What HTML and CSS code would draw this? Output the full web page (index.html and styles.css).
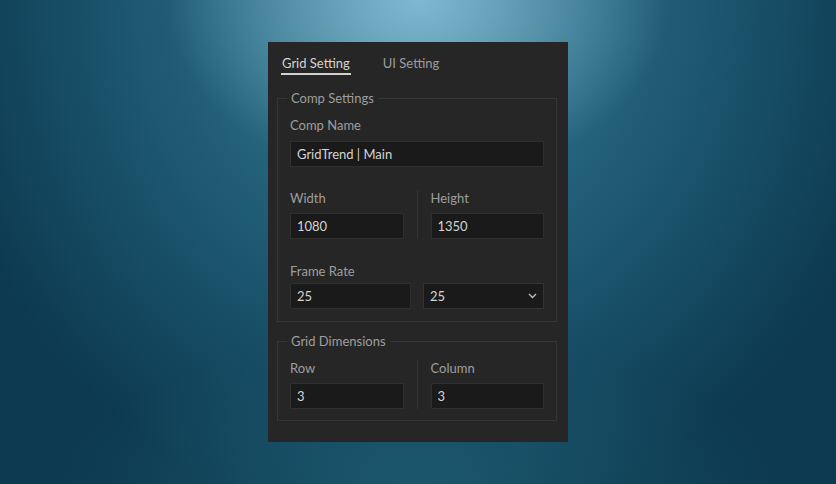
FILE: index.html
```html
<!DOCTYPE html>
<html lang="en">
<head>
  <meta charset="UTF-8" />
  <meta name="viewport" content="width=device-width, initial-scale=1.0"/>
  <title>GridTrend Settings</title>
  <link rel="stylesheet" href="styles.css">
</head>
<body>
  <div class="panel">
    <div class="tabs">
      <div class="tab active">Grid Setting</div>
      <div class="tab">UI Setting</div>
    </div>

    <fieldset class="group comp">
      <legend>Comp Settings</legend>

      <div class="field">
        <label>Comp Name</label>
        <input type="text" value="GridTrend | Main" />
      </div>

      <div class="split size">
        <div class="field">
          <label>Width</label>
          <input type="text" value="1080" />
        </div>
        <div class="divider"></div>
        <div class="field">
          <label>Height</label>
          <input type="text" value="1350" />
        </div>
      </div>

      <div class="field rate">
        <label>Frame Rate</label>
        <div class="pair">
          <input type="text" value="25" />
          <div class="select">
            <span>25</span>
            <svg width="9" height="6" viewBox="0 0 9 6"><path d="M1 1l3.5 3.5L8 1" fill="none" stroke="#c0c0c0" stroke-width="1.3"/></svg>
          </div>
        </div>
      </div>
    </fieldset>

    <fieldset class="group dims">
      <legend>Grid Dimensions</legend>
      <div class="split">
        <div class="field">
          <label>Row</label>
          <input type="text" value="3" />
        </div>
        <div class="divider"></div>
        <div class="field">
          <label>Column</label>
          <input type="text" value="3" />
        </div>
      </div>
    </fieldset>
  </div>
</body>
</html>
```

FILE: styles.css
```css
:root {
  --panel: #262626;
  --line: #363636;
  --field: #1a1a1a;
  --label: #9e9e9e;
  --text: #d4d4d4;
}

html, body {
  height: 100%;
}

body {
  margin: 0;
  font-family: 'Lato', 'Open Sans', sans-serif;
  font-size: 13px;
  background:
    radial-gradient(ellipse 30% 38% at 50% 0%, rgba(128, 188, 210, 0.95), rgba(128, 188, 210, 0) 100%),
    radial-gradient(ellipse 42% 30% at 50% 100%, rgba(30, 92, 114, 0.8), rgba(30, 92, 114, 0) 100%),
    radial-gradient(ellipse 58% 110% at 50% 0%, #3f7d98 0%, #23607a 45%, #164c64 75%, #0d3a50 100%);
  background-color: #0d3a50;
  display: flex;
  justify-content: center;
  align-items: flex-start;
}

.panel {
  width: 300px;
  height: 400px;
  box-sizing: border-box;
  margin-top: 42px;
  padding: 13px 11px 0 9px;
  background: var(--panel);
}

.tabs {
  display: flex;
  gap: 32px;
  padding-left: 5px;
}

.tab {
  line-height: 16px;
  padding-bottom: 2px;
  color: var(--label);
  border-bottom: 2px solid transparent;
}

.tab.active {
  color: var(--text);
  border-bottom-color: #d2d2d2;
  margin-left: -1px;
  padding: 0 1px 2px;
}

.group {
  margin: 15px 0 0;
  padding: 0 12px 12px;
  border: 1px solid var(--line);
  min-width: 0;
}

.group.dims {
  margin-top: 11px;
  padding-bottom: 11px;
}

legend {
  margin-left: -3px;
  padding: 0 4px;
  line-height: 16px;
  color: var(--label);
}

.field {
  display: flex;
  flex-direction: column;
  min-width: 0;
}

label {
  line-height: 16px;
  color: var(--label);
  margin-bottom: 8px;
}

input, .select {
  box-sizing: border-box;
  width: 100%;
  height: 26px;
  margin: 0;
  padding: 0 6px;
  font: inherit;
  color: var(--text);
  background: var(--field);
  border: 1px solid #2f2f2f;
  outline: none;
}

.comp > .field:first-of-type {
  margin-top: 11px;
}

.split {
  display: grid;
  grid-template-columns: 1fr 1px 1fr;
  column-gap: 13px;
}

.size {
  margin-top: 23px;
}

.dims .split {
  margin-top: 11px;
}

.split label {
  margin-bottom: 7px;
}

.divider {
  background: var(--line);
}

.rate {
  margin-top: 24px;
}

.rate label {
  margin-bottom: 4px;
}

.pair {
  display: grid;
  grid-template-columns: 1fr 1fr;
  column-gap: 12px;
}

.select {
  display: flex;
  align-items: center;
  justify-content: space-between;
  padding-right: 6px;
  border-color: #333;
}
```
